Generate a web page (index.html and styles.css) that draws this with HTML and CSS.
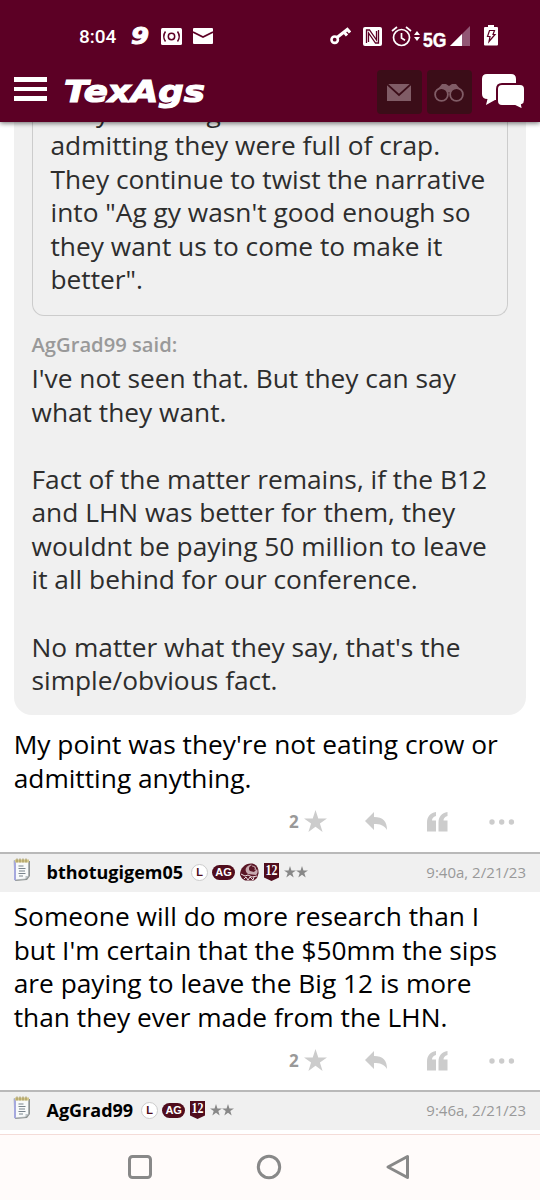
FILE: index.html
```html
<!DOCTYPE html>
<html lang="en">
<head>
  <meta charset="UTF-8">
  <title>TexAgs</title>
  <link rel="stylesheet" href="styles.css">
</head>
<body>

  <svg class="defs" width="0" height="0">
    <symbol id="star" viewBox="0 0 24 24"><path d="M12 0l2.900 8.800h9.100l-7.400 5.400 2.800 8.800-7.400-5.400-7.400 5.400 2.800-8.800L0 8.800h9.100z"/></symbol>
    <symbol id="reply" viewBox="0 0 22 19"><path d="M9 0v5c9 0 13 4 13 13-3-5-7-6-13-6v6L0 9z"/></symbol>
    <symbol id="quote" viewBox="0 0 21 20"><path d="M9 0v4C6 5 5 6.500 5 8.500h4v11H0V10C0 5 3 1 9 0zM20.500 0v4c-3 1-4 2.500-4 4.500h4v11h-9V10c0-5 3-9 9-10z"/></symbol>
    <symbol id="dots" viewBox="0 0 26 6"><circle cx="3" cy="3" r="2.700"/><circle cx="12.700" cy="3" r="2.700"/><circle cx="22.400" cy="3" r="2.700"/></symbol>
    <symbol id="note" viewBox="0 0 18 24">
      <path d="M2 3h15v15l-3 4-12 1z" fill="#8d9290"/>
      <path d="M1 2.500h14.500v15.500l-3 3L2 22z" fill="#f8fafa" stroke="#a2a9ae" stroke-width=".7"/>
      <path d="M1 3v19l2 .5V3z" fill="#a5a8de"/>
      <path d="M2 1.500h14v3H2z" fill="#d3c78c"/>
      <path d="M4 .5v4M7 .5v4M10 .5v4M13 .5v4" stroke="#9c8e54" stroke-width="1"/>
      <path d="M5.500 8h5M5.500 10.500h7M6 13h6M5.500 15.500h7M6 18h4" stroke="#78838c" stroke-width="1.100"/>
      <path d="M12.500 21v-3h3z" fill="#bcc3c8"/>
    </symbol>
    <symbol id="shield" viewBox="0 0 15 18">
      <path d="M0 0h15v14.500L7.500 18 0 14.500z" fill="#500d1d"/>
      <text x="1.500" y="12.300" textLength="12" lengthAdjust="spacingAndGlyphs" class="shield-text">12</text>
    </symbol>
    <symbol id="helmet" viewBox="0 0 19 18">
      <path d="M0 12C0 5 5 .5 11 .5c5 0 8 4 7.500 10L17 15l-3 2.500H5l-3-2z" fill="#5a1626"/>
      <path d="M11 1.500C5 3 4 8 8 11l8 1c2-2 2-4 1-6L14 9l-4-1C8 6 9 3 12 2z" fill="#c7a9af"/>
      <path d="M12 3c3 0 4 2 3 4" fill="none" stroke="#c7a9af" stroke-width="1.200"/>
      <path d="M1 11l4 2 3-1 4 2 5-1M4 16l2-2 2 3 2-3 3 3 1-3" fill="none" stroke="#eadfe1" stroke-width="1"/>
    </symbol>
  </svg>

  <div class="header">
    <div class="status">
      <span class="clock">8:04</span>
      <svg class="nine" width="21" height="26"><text x="0" y="21" textLength="18" lengthAdjust="spacingAndGlyphs">9</text></svg>
      <svg class="cast" width="21" height="17" viewBox="0 0 21 17">
        <rect width="21" height="17" rx="1.500" fill="#fff"/>
        <g fill="none" stroke="#5c0025" stroke-width="1.500"><circle cx="10.500" cy="8.500" r="3.200"/><path d="M4.500 3.500q-3.500 5 0 10M16.500 3.500q3.500 5 0 10"/></g>
      </svg>
      <svg class="mail-small" width="20" height="16" viewBox="0 0 20 16"><rect width="20" height="16" rx="1" fill="#fff"/><path d="M0 4l10 5 10-5" fill="none" stroke="#5c0025" stroke-width="1.600"/></svg>

      <svg class="key" width="21" height="18" viewBox="0 0 21 18"><g fill="none" stroke="#fff"><circle cx="4.700" cy="12.700" r="3.200" stroke-width="2.600"/><path d="M7 10.500L18.500 1.500M14 5l3 3.500M17.500 2.500l2.500 3" stroke-width="3"/></g></svg>
      <svg class="nfc" width="19" height="19" viewBox="0 0 19 19"><rect width="19" height="19" rx="2" fill="#fff"/><path d="M3.500 16V3h3l7 10V4M15.500 3v13h-3l-7-10v9" fill="none" stroke="#5c0025" stroke-width="1.300"/></svg>
      <svg class="alarm" width="21" height="21" viewBox="0 0 21 21"><g fill="none" stroke="#fff" stroke-width="1.700"><circle cx="10.500" cy="11.500" r="8"/><path d="M10.500 7v5l3.500 2.200M1 5l5-4M20 5l-5-4"/></g></svg>
      <svg class="updown" width="6" height="10" viewBox="0 0 6 10"><path d="M0 4l3-4 3 4zM0 6h6l-3 4z" fill="#fff"/></svg>
      <svg class="net" width="25" height="26"><text x="0" y="20" textLength="23.500" lengthAdjust="spacingAndGlyphs">5G</text></svg>
      <svg class="signal" width="20" height="20" viewBox="0 0 20 20"><path d="M20 0v20H0z" fill="#925674"/><path d="M12 8v12H0z" fill="#fff"/></svg>
      <svg class="battery" width="14" height="21" viewBox="0 0 14 21"><path d="M4 0h6v2h3q1 0 1 1v16.500q0 1-1 1H1q-1 0-1-1V3q0-1 1-1h3z" fill="#fff"/><path d="M5.500 5.500h5L9 9.500h2l-6 7 1-5H3.500z" fill="none" stroke="#5c0025" stroke-width="1.200"/></svg>
    </div>
    <div class="toolbar">
      <div class="burger"><i></i><i></i><i></i></div>
      <svg class="logo" width="144" height="42"><text x="1" y="29" textLength="141" lengthAdjust="spacingAndGlyphs">TexAgs</text></svg>
      <div class="tool">
        <svg width="24" height="17" viewBox="0 0 24 17"><rect width="24" height="17" fill="#805c66"/><path d="M0 0l12 11L24 0" fill="none" stroke="#3b0d18" stroke-width="1.700"/></svg>
      </div>
      <div class="tool binoculars">
        <svg width="30" height="19" viewBox="0 0 30 19"><path d="M3 7l5-6h4l3 2 3-2h4l5 6-2 2H5z" fill="#805c66"/><g fill="#3b0d18" stroke="#805c66" stroke-width="1.800"><circle cx="7.500" cy="11.500" r="6.400"/><circle cx="22.500" cy="11.500" r="6.400"/></g></svg>
      </div>
      <svg class="chat" width="44" height="36" viewBox="0 0 44 36">
        <path d="M6 0h24q5 0 5 5v17q0 4-5 4H14L5 31l1.500-6Q1 25 1 20V5q0-5 5-5z" fill="#fff"/>
        <path d="M21 10h18q5 0 5 5v11q0 4-3 5l1 5-8-4H21q-5 0-5-5V15q0-5 5-5z" fill="#fff" stroke="#5c0025" stroke-width="2"/>
      </svg>
    </div>
  </div>

  <div class="thread">
    <div class="quote">
      <div class="nested">They're acting like we're the ones<br>admitting they were full of crap.<br>They continue to twist the narrative<br>into "Ag gy wasn't good enough so<br>they want us to come to make it<br>better".</div>
      <div class="said">AgGrad99 said:</div>
      I've not seen that. But they can say<br>what they want.<br><br>Fact of the matter remains, if the B12<br>and LHN was better for them, they<br>wouldnt be paying 50 million to leave<br>it all behind for our conference.<br><br>No matter what they say, that's the<br>simple/obvious fact.
    </div>
    <div class="text first">My point was they're not eating crow or<br>admitting anything.</div>
    <div class="actions">
      <b>2</b>
      <svg class="a-star"><use href="#star"/></svg>
      <svg class="a-reply"><use href="#reply"/></svg>
      <svg class="a-quote"><use href="#quote"/></svg>
      <svg class="a-dots"><use href="#dots"/></svg>
    </div>

    <div class="post-head">
      <svg class="note"><use href="#note"/></svg>
      <span class="user">bthotugigem05</span>
      <span class="badge-l">L</span>
      <span class="badge-ag">AG</span>
      <svg class="helmet"><use href="#helmet"/></svg>
      <svg class="shield"><use href="#shield"/></svg>
      <svg class="rank"><use href="#star"/></svg><svg class="rank"><use href="#star"/></svg>
      <span class="date">9:40a, 2/21/23</span>
    </div>
    <div class="text second">Someone will do more research than I<br>but I'm certain that the $50mm the sips<br>are paying to leave the Big 12 is more<br>than they ever made from the LHN.</div>
    <div class="actions">
      <b>2</b>
      <svg class="a-star"><use href="#star"/></svg>
      <svg class="a-reply"><use href="#reply"/></svg>
      <svg class="a-quote"><use href="#quote"/></svg>
      <svg class="a-dots"><use href="#dots"/></svg>
    </div>

    <div class="post-head">
      <svg class="note"><use href="#note"/></svg>
      <span class="user">AgGrad99</span>
      <span class="badge-l">L</span>
      <span class="badge-ag">AG</span>
      <svg class="shield"><use href="#shield"/></svg>
      <svg class="rank"><use href="#star"/></svg><svg class="rank"><use href="#star"/></svg>
      <span class="date">9:46a, 2/21/23</span>
    </div>
  </div>

  <div class="nav">
    <svg width="26" height="26"><rect x="2.500" y="2.500" width="21" height="21" rx="3"/></svg>
    <svg width="26" height="26"><circle cx="13" cy="13" r="10.700"/></svg>
    <svg width="26" height="26"><path d="M22.500 2.500v21L3 13z"/></svg>
  </div>

</body>
</html>
```
FILE: styles.css
```css
* { box-sizing: border-box; }
body {
  margin: 0;
  width: 540px;
  height: 1200px;
  overflow: hidden;
  display: flex;
  flex-direction: column;
  background: #fff;
  font-family: "Open Sans", sans-serif;
}
svg { display: block; flex: none; }
.defs { position: absolute; }

/* header */
.header {
  position: relative;
  z-index: 1;
  flex: none;
  height: 122px;
  background: #5c0025;
  box-shadow: 0 1px 5px rgba(0, 0, 0, .6);
}
.status { display: flex; align-items: center; height: 72px; padding-left: 79px; }
.clock { width: 52px; font: 500 19px Roboto, sans-serif; color: #fff; white-space: nowrap; }
.nine text { font: italic bold 23px "DejaVu Sans", sans-serif; fill: #fff; stroke: #fff; }
.cast { margin-left: 9px; }
.mail-small { margin-left: 11px; }
.key { margin-left: 117px; }
.nfc { margin-left: 12px; }
.alarm { margin-left: 9px; }
.updown { margin-left: 2px; }
.net { margin: 7px 0 0 3px; }
.net text { font: bold 21px "Liberation Sans", sans-serif; fill: #fff; stroke: #fff; stroke-width: .4; }
.signal { margin-left: 2px; }
.battery { margin: -1px 0 0 14px; }

.toolbar { display: flex; align-items: flex-start; height: 50px; padding-left: 14px; }
.burger { display: flex; flex-direction: column; gap: 5px; width: 33px; margin-top: 5px; }
.burger i { height: 4.700px; background: #fff; }
.logo { margin: 1px 0 0 16px; }
.logo text { font: italic bold 31px "DejaVu Sans", sans-serif; fill: #fff; stroke: #fff; stroke-width: 1.200; }
.tool {
  display: flex;
  align-items: center;
  justify-content: center;
  width: 45px;
  height: 44px;
  margin: -2px 0 0 169.500px;
  background: #3b0d18;
  border-radius: 4px;
}
.binoculars { margin-left: 5px; }
.chat { margin: 2px 0 0 9px; }

/* thread */
.thread { flex: none; height: 1012px; overflow: hidden; border-bottom: 3px solid #fff; }
.quote {
  margin: -44.500px 14px 0 13.500px;
  padding: 18px 18px 17.500px;
  background: #f0f0f0;
  border-radius: 0 0 18px 18px;
  color: #2d2d2d;
}
.quote, .text { font-size: 26.300px; line-height: 33.550px; white-space: nowrap; }
.nested {
  padding: 0 18px 18px;
  border: 1px solid #ccc;
  border-top: 0;
  border-radius: 0 0 12px 12px;
}
.said { margin-top: 12.500px; margin-bottom: .3px; font-size: 20.200px; font-weight: 600; color: #999; }
.text { padding-left: 13.700px; color: #000; }
.first { padding-top: 13px; }
.second { padding-top: 8px; }
.second + .actions { height: 56px; padding-bottom: 3px; }

.actions {
  display: flex;
  align-items: center;
  height: 57px;
  padding: 0 0 4px 289px;
  fill: #ccc;
}
.actions b { width: 15px; font-size: 17px; font-weight: 700; color: #999; }
.a-star { width: 23px; height: 23px; }
.a-reply { width: 22px; height: 19px; margin-left: 38px; }
.a-quote { width: 21px; height: 20px; margin-left: 40px; }
.a-dots { width: 26px; height: 6px; margin-left: 41px; }

.post-head {
  display: flex;
  align-items: center;
  height: 40px;
  padding: 0 14px 2px 13px;
  border-top: 2px solid #b9b9b9;
  background: #f0f0f0;
}
.note { width: 18px; height: 24px; margin-top: -4px; }
.user { margin: 0 8px 0 15.500px; font-size: 18px; font-weight: 700; color: #000; }
.badge-l, .badge-ag {
  display: flex;
  align-items: center;
  justify-content: center;
  height: 17px;
  border-radius: 9px;
  font: bold 11px "Liberation Sans", sans-serif;
}
.badge-l { width: 17px; background: #fff; border: 1px solid #ccc; color: #500d1d; }
.badge-ag { width: 23px; height: 15px; margin-left: 4px; background: #500d1d; color: #fff; }
.helmet { width: 19px; height: 18px; margin-left: 5px; }
.shield { width: 15px; height: 18px; margin: 0 5px; }
.shield-text { font: bold 14px "Liberation Serif", serif; fill: #fff; }
.rank { width: 12px; height: 12px; fill: #888; }
.date { margin-left: auto; font-size: 15px; color: #999; }

/* bottom navigation */
.nav {
  flex: none;
  display: flex;
  justify-content: center;
  align-items: center;
  gap: 103px;
  height: 66px;
  padding: 0 3px 2px 0;
  border-top: 1px solid #f4dcd8;
  background: #fffbfa;
}
.nav svg { fill: none; stroke: #888; stroke-width: 3; stroke-linejoin: round; }
```
